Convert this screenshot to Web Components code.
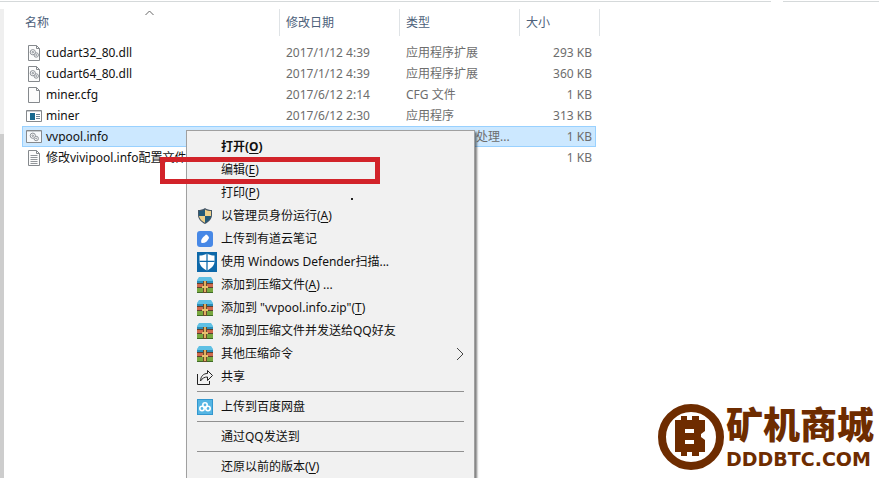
<!DOCTYPE html>
<html lang="zh-CN">
<head>
<meta charset="utf-8">
<meta name="viewport" content="width=device-width, initial-scale=1">
<title>文件列表</title>
<style>
  html, body { margin: 0; height: 100%; overflow: hidden; }
  body {
    background: #fff;
    color: #111;
    font: 12px/20px 'Noto Sans', 'Noto Sans CJK SC', sans-serif;
  }
</style>
</head>
<body>
<explorer-window>
  <file-list></file-list>

  <context-menu slot="overlay">
    <menu-entry default>打开(<u>O</u>)</menu-entry>
    <menu-entry>编辑(<u>E</u>)</menu-entry>
    <menu-entry>打印(<u>P</u>)</menu-entry>
    <menu-entry icon="shield">以管理员身份运行(<u>A</u>)</menu-entry>
    <menu-entry icon="note">上传到有道云笔记</menu-entry>
    <menu-entry icon="defender">使用 Windows Defender扫描...</menu-entry>
    <menu-entry icon="zip">添加到压缩文件(<u>A</u>) ...</menu-entry>
    <menu-entry icon="zip">添加到 "vvpool.info.zip"(<u>T</u>)</menu-entry>
    <menu-entry icon="zip">添加到压缩文件并发送给QQ好友</menu-entry>
    <menu-entry icon="zip" submenu>其他压缩命令</menu-entry>
    <menu-entry icon="share">共享</menu-entry>
    <menu-divider></menu-divider>
    <menu-entry icon="cloud">上传到百度网盘</menu-entry>
    <menu-divider></menu-divider>
    <menu-entry>通过QQ发送到</menu-entry>
    <menu-divider></menu-divider>
    <menu-entry>还原以前的版本(<u>V</u>)</menu-entry>
  </context-menu>

  <mark-box slot="overlay"></mark-box>
  <site-logo slot="overlay" domain="DDDBTC.COM">矿机商城</site-logo>
</explorer-window>

<script>
(function () {
  'use strict';

  const GEARS = `
    <g fill="#fff" stroke="#8b9096">
      <circle cx="10.200" cy="10" r="2.200"/><circle cx="10.200" cy="10" r=".5"/>
      <circle cx="6.800" cy="7.200" r="2.600"/><circle cx="6.800" cy="7.200" r=".8"/>
    </g>`;
  const PAGE = '<path d="M2.500.5h8l3 3v12h-11z" fill="#fcfcfc" stroke="#85898d"/><path d="M10.500.5v3h3" fill="none" stroke="#85898d"/>';

  // 16×16 图标
  const ICONS = {
    dll: PAGE + GEARS,
    file: PAGE,
    text: PAGE + '<path d="M4.500 5.500h7M4.500 7.500h7M4.500 9.500h7M4.500 11.500h7M4.500 13.500h7" stroke="#92969a"/>',
    exe: `
      <path d="M.5 2.500h15v11H.5z" fill="#fff" stroke="#85898d"/>
      <path d="M1 3h14v1H1z" fill="#c9cdd0"/>
      <path d="M4 5h5v7H4z" fill="#17698f"/>
      <path d="M10 6.500h4M10 8.500h4M10 10.500h4" stroke="#6f8796"/>`,
    bat: `
      <path d="M.5 1.500h15v12H.5z" fill="#f7f9fb" stroke="#85898d"/>
      <path d="M1 2h14v1H1z" fill="#c9cdd0"/>
      <g transform="translate(0 -.5)">${GEARS}</g>`,
    shield: `
      <path d="M8 0c2 1.500 4.500 2 7 2v5c0 4-3 7-7 9-4-2-7-5-7-9V2c2.500 0 5-.5 7-2z" fill="#465766"/>
      <path d="M8 1.500V8H2V3C4.200 3 6.200 2.500 8 1.500z" fill="#235a78"/>
      <path d="M8 1.500V8h6V3C11.800 3 9.800 2.500 8 1.500z" fill="#ecd08a"/>
      <path d="M8 8H2c.4 3 3 5.200 6 6.800z" fill="#ecd08a"/>
      <path d="M8 8h6c-.4 3-3 5.200-6 6.800z" fill="#235a78"/>`,
    note: `
      <rect width="16" height="16" rx="3" fill="#4788e6"/>
      <path d="M4.500 12c-1-3 0-4.500 4.500-8.500 1.500.5 3 2 3 3.500C10.500 10.500 8 12.500 4.500 12z" fill="#fff"/>`,
    defender: `
      <path d="M0 0h16v16H0z" fill="#0d68a9"/>
      <path d="M8 1.200c2 1.200 4 1.600 6 1.600v4.700c0 3.300-2.500 5.500-6 7.300-3.500-1.800-6-4-6-7.300V2.800c2 0 4-.4 6-1.600z" fill="#fff"/>
      <path d="M8 1v14M2 7.500h12" stroke="#0d68a9"/>`,
    zip: `
      <path d="M2 0h12l2 3v2H0V3z" fill="#5fc0e4"/><path d="M0 4h16v2H0z" fill="#2b8fb8"/>
      <path d="M0 6h16v1H0z" fill="#5d4030"/><path d="M0 7h16v3H0z" fill="#d0694c"/>
      <path d="M0 10h16v1H0z" fill="#5d4030"/><path d="M0 11h16v4H0z" fill="#78a840"/><path d="M0 15h16v1H0z" fill="#3e6b27"/>
      <path d="M6 4h4v12H6z" fill="#6a4a2c"/><path d="M7 4h2v11H7z" fill="#e0b060"/>
      <path d="M5 9h6v2H5z" fill="#e8c070"/>`,
    share: `
      <path d="M.5 5v10.500h12V12" fill="none" stroke="#222"/>
      <path d="M3.500 12c.3-5 3-7.500 7-7.500V1.500l5 5-5 5V8c-3 0-5 1-7 4z" fill="none" stroke="#222"/>`,
    cloud: `
      <path d="M0 0h16v16H0z" fill="#3297cf"/><path d="M1 1h14v14H1z" fill="#55b5e3"/>
      <g fill="none" stroke="#fff" stroke-width="1.600"><circle cx="8" cy="6" r="2.200"/><circle cx="5" cy="9.500" r="2.200"/><circle cx="11" cy="9.500" r="2.200"/></g>`
  };

  function icon(name, size = 16) {
    return ICONS[name]
      ? `<svg width="${size}" height="${size}" viewBox="0 0 16 16" aria-hidden="true">${ICONS[name]}</svg>`
      : '';
  }

  function define(name, html, setup) {
    const template = document.createElement('template');
    template.innerHTML = html;
    customElements.define(name, class extends HTMLElement {
      constructor() {
        super();
        this.attachShadow({ mode: 'open' }).appendChild(template.content.cloneNode(true));
      }
      connectedCallback() { if (setup) setup(this, this.shadowRoot); }
    });
  }

  /* <explorer-window> —— 窗口外框：顶部分隔线、左侧滚动条、内容区 */
  define('explorer-window', `
    <style>
      :host { display: flex; flex-direction: column; position: relative; height: 100%; overflow: hidden; }
      .top { display: flex; gap: 12px; height: 1px; margin-top: 1px; }
      .top i { background: #d5d9da; flex: 771; }
      .top i + i { flex: 96; }
      .main { display: flex; flex: 1; gap: 18px; padding-top: 7px; }
      .scroll { width: 4px; background: linear-gradient(#efefef 125px, #cdcdcd 125px); }
      .content { flex: 1; }
    </style>
    <div class="top"><i></i><i></i></div>
    <div class="main">
      <div class="scroll"></div>
      <div class="content"><slot></slot></div>
    </div>
    <slot name="overlay"></slot>
  `);

  /* <file-list> —— 详细信息视图 */
  const FILES = [
    ['dll', 'cudart32_80.dll', '2017/1/12 4:39', '应用程序扩展', '293 KB'],
    ['dll', 'cudart64_80.dll', '2017/1/12 4:39', '应用程序扩展', '360 KB'],
    ['file', 'miner.cfg', '2017/6/12 2:14', 'CFG 文件', '1 KB'],
    ['exe', 'miner', '2017/6/12 2:30', '应用程序', '313 KB'],
    ['bat', 'vvpool.info', '', '处理...', '1 KB'],
    ['text', '修改vivipool.info配置文件', '', '', '1 KB']
  ];

  define('file-list', `
    <style>
      :host { display: block; }
      table { border-collapse: separate; border-spacing: 0; table-layout: fixed; width: 578px; }
      th, td { box-sizing: border-box; padding: 0 0 0 6px; text-align: left; font-weight: 400; white-space: nowrap; }
      th { height: 27px; border-right: 1px solid #dfe3e6; color: #4c607a; }
      th:first-child { padding-left: 3px; }
      .c-name { width: 258px; } .c-date, .c-type { width: 120px; } .c-size { width: 76px; } .c-edge { width: 4px; }
      .sort { display: flex; align-items: center; }
      .sort svg { margin: 0 0 20px 96px; }
      tbody::before { content: ''; display: block; height: 6px; }
      td { height: 21px; line-height: 19px; color: #6d6d6d; }
      td:first-child { padding-left: 4px; color: #111; }
      td:nth-child(4) { padding-right: 4px; text-align: right; }
      td:last-child { padding: 0; }
      .file { display: flex; align-items: center; gap: 4px; }
      td.clip { padding-left: 76px; }
      .on td:not(:last-child) { background: #cce8ff; border: solid #99d1ff; border-width: 1px 0; }
      .on td:first-child { border-left-width: 1px; padding-left: 3px; }
      .on td:nth-child(4) { border-right-width: 1px; padding-right: 3px; }
    </style>
    <table>
      <colgroup><col class="c-name"><col class="c-date"><col class="c-type"><col class="c-size"><col class="c-edge"></colgroup>
      <thead><tr>
        <th><span class="sort">名称<svg width="9" height="6" viewBox="0 0 9 6"><path d="M.5 5l4-4 4 4" fill="none" stroke="#666"/></svg></span></th>
        <th>修改日期</th><th>类型</th><th colspan="2">大小</th>
      </tr></thead>
      <tbody></tbody>
    </table>
  `, (host, root) => {
    root.querySelector('tbody').innerHTML = FILES.map(([kind, name, date, type, size]) => `
      <tr class="${kind === 'bat' ? 'on' : ''}">
        <td><span class="file">${icon(kind)}<span>${name}</span></span></td>
        <td>${date}</td>
        <td class="${kind === 'bat' ? 'clip' : ''}">${type}</td>
        <td>${size}</td>
        <td></td>
      </tr>`).join('');
  });

  /* <context-menu> —— 浮在列表之上的右键菜单 */
  define('context-menu', `
    <style>
      :host {
        position: absolute; left: 186px; top: 130px; box-sizing: border-box; width: 289px;
        padding: 4px 0; background: #f1f1f1; border: 1px solid #a0a0a0;
        box-shadow: 2px 2px 2px rgba(0, 0, 0, .5);
      }
    </style>
    <div role="menu"><slot></slot></div>
  `);

  define('menu-entry', `
    <style>
      :host { display: block; }
      button {
        display: flex; align-items: center; width: 100%; height: 23px; padding: 0 10px;
        border: 0; background: none; color: #111; font: inherit; text-align: left; white-space: nowrap;
      }
      button:hover { background: #fff; }
      :host([default]) button { font-weight: 700; }
      .icon { display: flex; width: 24px; }
      .icon svg { flex: none; }
      .label { flex: 1; }
      ::slotted(u) { text-underline-offset: 2px; }
    </style>
    <button type="button" role="menuitem"><span class="icon"></span><span class="label"><slot></slot></span></button>
  `, (host, root) => {
    const name = host.getAttribute('icon');
    root.querySelector('.icon').innerHTML = icon(name, name === 'defender' ? 20 : 16);
    if (host.hasAttribute('submenu')) {
      root.querySelector('button').insertAdjacentHTML('beforeend',
        '<svg width="8" height="14" viewBox="0 0 8 14"><path d="M1 1l6 6-6 6" fill="none" stroke="#444"/></svg>');
    }
  });

  define('menu-divider', `
    <style>
      :host { display: block; padding: 3px 10px; }
      hr { margin: 0; border: 0; height: 1px; background: #919191; }
    </style>
    <hr>
  `);

  /* <mark-box> —— 圈出「编辑」的红框，以及旁边的小黑点 */
  define('mark-box', `
    <style>
      :host {
        position: absolute; left: 160px; top: 157px; box-sizing: border-box;
        width: 220px; height: 27px; border: 5px solid #d2232a; pointer-events: none;
      }
      i { position: absolute; left: 186px; top: 36px; width: 2px; height: 2px; background: #222; }
    </style>
    <i></i>
  `);

  /* <site-logo> —— 右下角水印 */
  define('site-logo', `
    <style>
      :host {
        position: absolute; right: 5px; bottom: 8px; display: flex; align-items: center; gap: 2px;
        color: #6e2c00; white-space: nowrap;
      }
      .words { display: flex; flex-direction: column; }
      .title { font: 900 37px/44px 'Liberation Sans', 'Noto Sans CJK SC', sans-serif; }
      .domain { font: 700 19px/20px 'DejaVu Sans', sans-serif; }
    </style>
    <svg width="66" height="66" viewBox="0 0 66 66" aria-hidden="true">
      <circle cx="33" cy="33" r="29" fill="none" stroke="currentColor" stroke-width="8"/>
      <path d="M23 12h6v4h5v-4h7v4h6v11l-4 3v3l4 3v12h-6v4h-7v-4h-5v4h-6v-4h-6V16h6z" fill="currentColor"/>
      <path d="M27 25h9v4h-9zM27 36h9v4h-9z" fill="#fff"/>
    </svg>
    <span class="words"><span class="title"><slot></slot></span><span class="domain"></span></span>
  `, (host, root) => {
    root.querySelector('.domain').textContent = host.getAttribute('domain');
  });
})();
</script>
</body>
</html>
